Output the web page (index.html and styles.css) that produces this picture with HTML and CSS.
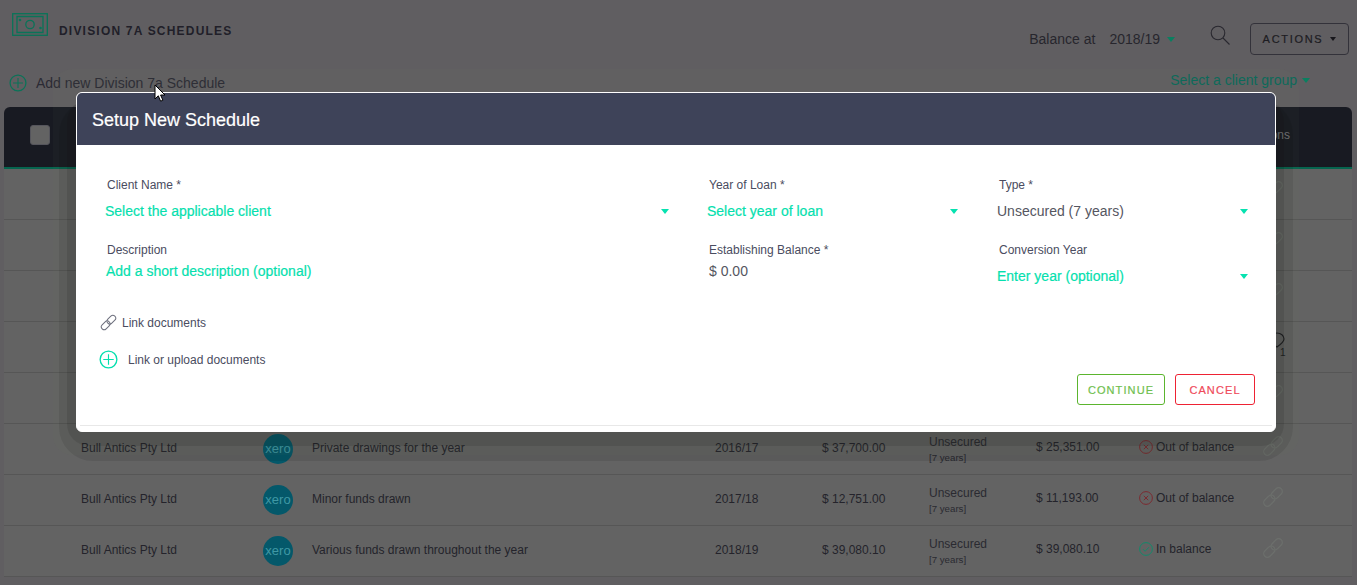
FILE: index.html
```html
<!DOCTYPE html>
<html lang="en">
<head>
<meta charset="utf-8">
<title>Division 7A Schedules</title>
<link rel="stylesheet" href="styles.css">
</head>
<body>
<svg class="defs" width="0" height="0" aria-hidden="true">
  <symbol id="chain" viewBox="0 0 24 24">
    <g fill="none" stroke="currentColor" stroke-width="1.4">
      <rect x="1" y="12" width="14" height="8" rx="4" transform="rotate(-45 8 16)"/>
      <rect x="9" y="4" width="14" height="8" rx="4" transform="rotate(-45 16 8)"/>
    </g>
  </symbol>
  <symbol id="plus" viewBox="0 0 20 20">
    <g fill="none" stroke="currentColor">
      <circle cx="10" cy="10" r="8.8" stroke-width="1.4"/>
      <path d="M10 4.5v11M4.5 10h11" stroke-width="1.2"/>
    </g>
  </symbol>
  <symbol id="wrong" viewBox="0 0 14 14">
    <g fill="none" stroke="currentColor">
      <circle cx="7" cy="7" r="6.4" stroke-width="1"/>
      <path d="M4.8 4.8l4.4 4.4M9.2 4.800l-4.4 4.400" stroke-width="1"/>
    </g>
  </symbol>
  <symbol id="right" viewBox="0 0 14 14">
    <g fill="none" stroke="currentColor">
      <circle cx="7" cy="7" r="6.4" stroke-width="1"/>
      <path d="M4 7.2l2.100 2.100L10 5.200" stroke-width="1"/>
    </g>
  </symbol>
</svg>

<div class="page">
  <header class="topbar">
    <svg class="money" viewBox="0 0 36 23" aria-hidden="true">
      <g fill="none" stroke="currentColor" stroke-width="1.3">
        <rect x="0.7" y="0.7" width="34.6" height="21.6"/>
        <path d="M5 3.500h26v16H5z"/>
        <circle cx="18" cy="11.500" r="4.200"/>
      </g>
      <circle cx="8" cy="7" r="1.300" fill="currentColor"/>
      <circle cx="28.500" cy="15" r="1.300" fill="currentColor"/>
    </svg>
    <h1 class="title">DIVISION 7A SCHEDULES</h1>
    <div class="balance">
      <span>Balance at</span>
      <span class="balance-year">2018/19</span>
      <span class="caret caret-green"></span>
    </div>
    <svg class="search" viewBox="0 0 20 20" aria-hidden="true">
      <circle cx="8" cy="8" r="6.800" fill="none" stroke="currentColor" stroke-width="1.100"/>
      <path d="M13 13l6.500 6.500" fill="none" stroke="currentColor" stroke-width="1.100"/>
    </svg>
    <div class="actions">ACTIONS <span class="caret caret-dark"></span></div>
  </header>

  <div class="subbar">
    <svg class="add-icon" aria-hidden="true"><use href="#plus"/></svg>
    <span class="add-text">Add new Division 7a Schedule</span>
    <span class="group">Select a client group <span class="caret caret-green caret-big"></span></span>
  </div>

  <section class="table">
    <div class="thead">
      <span class="checkbox"></span>
      <span class="thead-label">Actions</span>
    </div>
    <div class="row"><svg class="link"><use href="#chain"/></svg></div>
    <div class="row"><svg class="link"><use href="#chain"/></svg></div>
    <div class="row"><svg class="link"><use href="#chain"/></svg></div>
    <div class="row">
      <span class="comment">
        <svg class="comment-icon" viewBox="0 0 16 16" aria-hidden="true"><path d="M8 1c3.900 0 7 2.600 7 6 0 2.400-2 4.500-7 8-5-3.500-7-5.600-7-8 0-3.400 3.100-6 7-6z" fill="none" stroke="currentColor" stroke-width="1.200"/></svg>
        <span class="comment-count">1</span>
      </span>
    </div>
    <div class="row"><svg class="link"><use href="#chain"/></svg></div>
    <div class="row">
      <span class="cell">Bull Antics Pty Ltd</span>
      <span class="xero">xero</span>
      <span class="cell">Private drawings for the year</span>
      <span class="cell">2016/17</span>
      <span class="cell">$ 37,700.00</span>
      <span class="type">Unsecured<small>[7 years]</small></span>
      <span class="cell cell-up">$ 25,351.00</span>
      <span class="status"><svg class="status-icon bad"><use href="#wrong"/></svg>Out of balance</span>
      <svg class="link"><use href="#chain"/></svg>
    </div>
    <div class="row">
      <span class="cell">Bull Antics Pty Ltd</span>
      <span class="xero">xero</span>
      <span class="cell">Minor funds drawn</span>
      <span class="cell">2017/18</span>
      <span class="cell">$ 12,751.00</span>
      <span class="type">Unsecured<small>[7 years]</small></span>
      <span class="cell cell-up">$ 11,193.00</span>
      <span class="status"><svg class="status-icon bad"><use href="#wrong"/></svg>Out of balance</span>
      <svg class="link"><use href="#chain"/></svg>
    </div>
    <div class="row">
      <span class="cell">Bull Antics Pty Ltd</span>
      <span class="xero">xero</span>
      <span class="cell">Various funds drawn throughout the year</span>
      <span class="cell">2018/19</span>
      <span class="cell">$ 39,080.10</span>
      <span class="type">Unsecured<small>[7 years]</small></span>
      <span class="cell cell-up">$ 39,080.10</span>
      <span class="status"><svg class="status-icon good"><use href="#right"/></svg>In balance</span>
      <svg class="link"><use href="#chain"/></svg>
    </div>
  </section>
</div>

<div class="shade shade-outer"></div>
<div class="shade shade-inner"></div>

<div class="modal">
  <div class="modal-head">Setup New Schedule</div>
  <div class="modal-body">
    <div class="form">
      <div class="field">
        <label class="label">Client Name *</label>
        <div class="select select-client"><span class="value prompt">Select the applicable client</span><span class="caret caret-mint"></span></div>
      </div>
      <div class="field">
        <label class="label">Year of Loan *</label>
        <div class="select select-year"><span class="value prompt">Select year of loan</span><span class="caret caret-mint"></span></div>
      </div>
      <div class="field">
        <label class="label">Type *</label>
        <div class="select"><span class="value">Unsecured (7 years)</span><span class="caret caret-mint"></span></div>
      </div>
      <div class="field">
        <label class="label">Description</label>
        <div class="input"><span class="value prompt">Add a short description (optional)</span></div>
      </div>
      <div class="field">
        <label class="label">Establishing Balance *</label>
        <div class="input input-money"><span class="value">$ 0.00</span></div>
      </div>
      <div class="field">
        <label class="label">Conversion Year</label>
        <div class="select select-low"><span class="value prompt">Enter year (optional)</span><span class="caret caret-mint"></span></div>
      </div>
    </div>
    <div class="docs">
      <svg class="docs-link"><use href="#chain"/></svg>
      <span>Link documents</span>
    </div>
    <div class="upload">
      <svg class="upload-icon"><use href="#plus"/></svg>
      <span>Link or upload documents</span>
    </div>
    <div class="buttons">
      <span class="btn btn-go">CONTINUE</span>
      <span class="btn btn-stop">CANCEL</span>
    </div>
  </div>
</div>

<svg class="cursor" viewBox="0 0 12 19" aria-hidden="true">
  <path d="M1 1v14l3.300-3.200 2.300 5.400 2.300-1-2.300-5.200H11z" fill="#fff" stroke="#000" stroke-width="1"/>
</svg>
</body>
</html>
```
FILE: styles.css
```css
* { box-sizing: border-box; }

html, body {
  margin: 0;
  height: 585px;
  overflow: hidden;
}

body {
  background: #605e61;
  font-family: "Liberation Sans", Arial, sans-serif;
  color: #24232b;
  position: relative;
}

.defs { position: absolute; }

.page {
  height: 585px;
  display: flex;
  flex-direction: column;
}

/* Top bar */
.topbar {
  display: flex;
  align-items: flex-start;
  height: 69px;
  padding: 13px 8px 0 12px;
}

.money {
  width: 36px;
  height: 23px;
  color: #0a7358;
  flex: none;
}

.title {
  margin: 10px 0 0 11px;
  font-size: 12px;
  font-weight: bold;
  letter-spacing: 1.2px;
  line-height: 16px;
  color: #211f29;
}

.balance {
  margin: 18px 0 0 auto;
  display: flex;
  align-items: center;
  font-size: 14px;
  line-height: 16px;
  color: #27262d;
}

.balance-year { margin-left: 14px; }

.balance .caret { margin-left: 7px; }

.search {
  width: 20px;
  height: 20px;
  margin: 12px 0 0 35px;
  color: #29282f;
  flex: none;
}

.actions {
  width: 99px;
  height: 32px;
  margin: 10px 0 0 20px;
  border: 1px solid #33323a;
  border-radius: 4px;
  display: flex;
  align-items: center;
  justify-content: center;
  gap: 7px;
  font-size: 11px;
  letter-spacing: 1.7px;
  color: #1d1c22;
  -webkit-text-stroke: .2px #1d1c22;
}

.caret {
  display: inline-block;
  width: 0;
  height: 0;
  border-left: 4px solid transparent;
  border-right: 4px solid transparent;
  border-top: 5px solid currentColor;
}

.caret-green { color: #0a7f60; }
.caret-mint { color: #06e2b0; }
.caret-dark { color: #17161b; border-left-width: 3px; border-right-width: 3px; border-top-width: 4px; }

/* Sub bar */
.subbar {
  height: 38px;
  display: flex;
  align-items: flex-start;
  padding: 5px 47px 0 9px;
  font-size: 14px;
  line-height: 16px;
}

.add-icon {
  width: 18px;
  height: 18px;
  color: #0a7358;
  flex: none;
}

.add-text {
  margin: 1px 0 0 9px;
  color: #2b2a34;
}

.group {
  margin: -2px 0 0 auto;
  color: #08695a;
}

.caret-big { margin-left: 1px; vertical-align: 2px; }

/* Table */
.table {
  margin: 0 5px 0 4px;
}

.thead {
  height: 62px;
  background: #181a22;
  border-bottom: 2px solid #06654f;
  border-radius: 6px 6px 0 0;
  display: flex;
  align-items: center;
  justify-content: space-between;
  padding: 0 62px 4px 26px;
}

.checkbox {
  width: 20px;
  height: 20px;
  background: #636363;
  border: 1px solid #55555c;
  border-radius: 3px;
}

.thead-label {
  font-size: 12px;
  color: #77777c;
}

.row {
  height: 51px;
  background: #636363;
  border-bottom: 1px solid #565656;
  display: grid;
  grid-template-columns: 182px 49px 403px 107px 107px 107px 103px 123px 90px;
  align-items: center;
  padding-left: 77px;
  font-size: 12px;
  color: #24232b;
}

.cell { margin-top: -3px; }

.cell-up, .status { margin-top: -5px; }

.xero {
  width: 30px;
  height: 30px;
  border-radius: 50%;
  background: #04586a;
  color: #3f98a5;
  font-size: 13px;
  line-height: 30px;
  text-align: center;
}

.type {
  display: flex;
  flex-direction: column;
  line-height: 14px;
  color: #2a2a31;
}

.type small {
  margin-top: 3px;
  font-size: 9.7px;
  line-height: 11px;
}

.status {
  display: flex;
  align-items: center;
  gap: 3px;
}

.status-icon {
  width: 14px;
  height: 14px;
  flex: none;
}

.bad { color: #7c2a30; }
.good { color: #128a6b; }

.link {
  width: 22px;
  height: 22px;
  margin-top: -6px;
  color: #6c6f6c;
  grid-column: 9;
}

.comment {
  grid-column: 9;
  position: relative;
  height: 34px;
  color: #1e1e22;
}

.comment-icon {
  position: absolute;
  left: 7px;
  top: 2px;
  width: 16px;
  height: 16px;
}

.comment-count {
  position: absolute;
  left: 18px;
  top: 17px;
  font-size: 10px;
}

/* Modal backdrop bands */
.shade {
  position: absolute;
  background: rgba(0, 0, 0, .09);
}

.shade-outer {
  left: 59px;
  top: 100px;
  width: 1234px;
  height: 361px;
  border-radius: 34px;
}

.shade-inner {
  left: 67px;
  top: 100px;
  width: 1217px;
  height: 346px;
  border-radius: 22px;
}

/* Modal */
.modal {
  position: absolute;
  left: 76px;
  top: 92px;
  width: 1200px;
  height: 340px;
  background: #fff;
  border: 1px solid #fff;
  border-radius: 6px;
  box-shadow: 0 0 0 23px rgba(120, 140, 90, .05);
  color: #4a4c60;
}

.modal-head {
  height: 52px;
  background: #3e4359;
  border-radius: 5px 5px 0 0;
  color: #fff;
  font-size: 18px;
  line-height: 54px;
  padding-left: 15px;
  -webkit-text-stroke: .2px #fff;
}

.modal-body {
  height: 281px;
  margin: 0 3px;
  padding: 32px 0 0 25px;
  border-bottom: 1px solid #e8e8e8;
  position: relative;
}

.form {
  display: grid;
  grid-template-columns: 602px 290px 253px;
  grid-template-rows: 65px 50px;
}

.field {
  font-size: 14px;
}

.label {
  display: block;
  margin-left: 2px;
  font-size: 12px;
  line-height: 16px;
}

.select {
  display: flex;
  align-items: center;
  justify-content: space-between;
  margin-top: 10px;
  line-height: 16px;
}

.select .caret { margin-right: 2px; }

.select-client { padding-right: 36px; }

.select-year { padding-right: 37px; }

.select-low { margin-top: 10px; }

.input {
  margin-top: 5px;
  line-height: 16px;
  padding-left: 1px;
}

.input-money { padding-left: 2px; }

.value { color: #55565f; }

.prompt {
  color: #06dfae;
  -webkit-text-stroke: .2px #06dfae;
}

.docs {
  display: flex;
  align-items: center;
  gap: 5px;
  margin: 22px 0 0 -5px;
  font-size: 12px;
  line-height: 16px;
}

.docs-link {
  width: 17px;
  height: 17px;
  color: #6d6f7d;
}

.upload {
  display: flex;
  align-items: center;
  gap: 10px;
  margin: 19px 0 0 -6px;
  font-size: 12px;
  line-height: 16px;
}

.upload-icon {
  width: 19px;
  height: 19px;
  color: #06dfae;
}

.buttons {
  display: flex;
  justify-content: flex-end;
  gap: 10px;
  margin: 5px 17px 0 0;
}

.btn {
  height: 31px;
  display: flex;
  align-items: center;
  justify-content: center;
  border-radius: 3px;
  font-size: 11px;
  letter-spacing: 1.1px;
  -webkit-text-stroke: .2px currentColor;
}

.btn-go {
  width: 88px;
  border: 1px solid #5bb52e;
  color: #6fc04e;
}

.btn-stop {
  width: 80px;
  border: 1px solid #ee2233;
  color: #ef4a5a;
}

.cursor {
  position: absolute;
  left: 154px;
  top: 84px;
  width: 12px;
  height: 19px;
}
```
